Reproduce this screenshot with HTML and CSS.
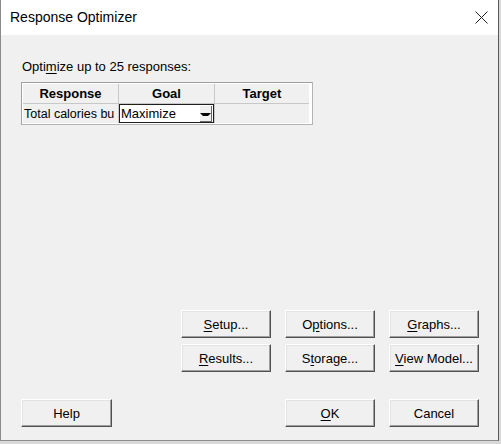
FILE: index.html
```html
<!DOCTYPE html>
<html>
<head>
    <title>Response Optimizer</title>
    <meta name="viewport" content="width=device-width, initial-scale=1">
    <link rel="stylesheet" href="styles.css">
</head>
<body>
    <div class="window">
        <div class="titlebar">
            <span class="title">Response Optimizer</span>
            <svg class="close" width="13" height="13" viewBox="0 0 13 13">
                <path d="M0.5 0.5 L12.5 12.5 M12.5 0.5 L0.5 12.5" stroke="#222" stroke-width="1" fill="none"/>
            </svg>
        </div>
        <div class="content">
            <p class="label">Opti<u>m</u>ize up to 25 responses:</p>
            <div class="grid">
                <table>
                    <tr>
                        <th class="col-resp">Response</th>
                        <th class="col-goal">Goal</th>
                        <th class="col-target">Target</th>
                    </tr>
                    <tr>
                        <td class="col-resp"><div class="clip">Total calories bu</div></td>
                        <td class="col-goal">
                            <div class="combo">
                                <span>Maximize</span>
                                <span class="drop"><span class="arrow"></span></span>
                            </div>
                        </td>
                        <td class="col-target"></td>
                    </tr>
                </table>
            </div>

            <div class="opt-buttons">
                <button class="button"><u>S</u>etup...</button>
                <button class="button">O<u>p</u>tions...</button>
                <button class="button"><u>G</u>raphs...</button>
                <button class="button"><u>R</u>esults...</button>
                <button class="button">S<u>t</u>orage...</button>
                <button class="button"><u>V</u>iew Model...</button>
            </div>

            <div class="bottom-row">
                <button class="button">Help</button>
                <div class="spacer"></div>
                <button class="button"><u>O</u>K</button>
                <button class="button">Cancel</button>
            </div>
        </div>
    </div>
</body>
</html>
```

FILE: styles.css
```css
body {
    margin: 0;
    background-color: #d9d9d9;
    font-family: 'Liberation Sans', Arial, sans-serif;
    color: #000;
}
.window {
    width: 497px;
    height: 440px;
    border-right: 1px solid #5a5a5a;
    border-bottom: 1px solid #8c8c8c;
    border-left: 1px solid #8c8c8c;
    background-color: #f0f0f0;
    display: flex;
    flex-direction: column;
}
.titlebar {
    height: 35px;
    background-color: #fff;
    display: flex;
    align-items: center;
    padding: 0 10px 0 9px;
    flex-shrink: 0;
}
.title {
    font-size: 14px;
    flex: 1;
    margin-top: -1px;
}
.close {
    display: block;
}
.content {
    padding: 0 19px 0 20px;
    font-size: 13px;
    display: flex;
    flex-direction: column;
}
.label {
    margin: 24px 0 0 1px;
    line-height: 16px;
}
u {
    text-decoration: underline;
    text-underline-offset: 2px;
}
.grid {
    margin-top: 7px;
    width: 288px;
    border: 1px solid #a0a0a0;
    border-right-color: #b4b4b4;
    border-bottom-color: #b4b4b4;
    padding: 1px;
    background-color: #fff;
}
table {
    border-collapse: collapse;
    table-layout: fixed;
    background-color: #f0f0f0;
}
th, td {
    border: 1px solid #c8c8c8;
    height: 19px;
    padding: 0;
    font-size: 13px;
}
tr:first-child th {
    border-top: none;
}
th:first-child, td:first-child {
    border-left: none;
}
tr:last-child td {
    border-bottom: none;
}
th {
    font-weight: bold;
    text-align: center;
}
.col-resp {
    width: 95px;
}
.col-goal {
    width: 95px;
}
.col-target {
    width: 94px;
    border-right: none;
}
.clip {
    overflow: hidden;
    white-space: nowrap;
    padding-left: 1px;
    width: 93px;
    font-size: 12.5px;
}
.combo {
    height: 17px;
    border: 1px solid #1e1e1e;
    background-color: #fff;
    display: flex;
    align-items: center;
    padding-left: 1px;
}
.combo span:first-child {
    flex: 1;
}
.drop {
    width: 11px;
    height: 15px;
    margin-right: 1px;
    background-color: #f0f0f0;
    border-right: 1px solid #696969;
    border-bottom: 1px solid #696969;
    display: flex;
    align-items: center;
    justify-content: center;
}
.arrow {
    width: 0;
    height: 0;
    border-left: 3px solid transparent;
    border-right: 3px solid transparent;
    border-top: 3px solid #000;
    margin-top: 2px;
}
.opt-buttons {
    margin-top: 185px;
    align-self: flex-end;
    display: grid;
    grid-template-columns: 90px 90px 90px;
    column-gap: 14px;
    row-gap: 6px;
}
.button {
    height: 28px;
    width: 90px;
    padding: 0;
    font-family: 'Liberation Sans', Arial, sans-serif;
    font-size: 13px;
    color: #000;
    background-color: #f0f0f0;
    border: 1px solid;
    border-color: #fff #505050 #505050 #fff;
    box-shadow: inset -1px -1px 0 #a0a0a0, inset 1px 1px 0 #e3e3e3;
}
.bottom-row {
    margin-top: 27px;
    display: flex;
    gap: 14px;
}
.bottom-row .button:first-child {
    width: 91px;
}
.spacer {
    flex: 1;
}
```
